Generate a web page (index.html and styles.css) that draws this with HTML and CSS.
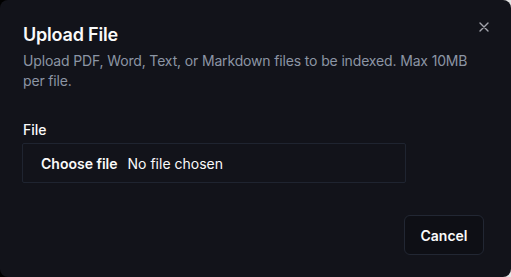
FILE: index.html
```html
<!DOCTYPE html>
<html lang="en">
<head>
    <meta charset="UTF-8">
    <meta name="viewport" content="width=device-width, initial-scale=1.0">
    <title>Upload File</title>
    <link rel="stylesheet" href="styles.css">
</head>
<body>
    <div class="dialog">
        <button class="close" aria-label="Close">
            <svg width="10" height="10" viewBox="0 0 10 10" fill="none" stroke="currentColor" stroke-width="1.4" stroke-linecap="round">
                <path d="M1 1L9 9M9 1L1 9"/>
            </svg>
        </button>
        <div class="header">
            <h2 class="title">Upload File</h2>
            <p class="description">Upload PDF, Word, Text, or Markdown files to be indexed. Max 10MB per file.</p>
        </div>
        <div class="field">
            <label class="label">File</label>
            <div class="file-input">
                <span class="file-btn">Choose file</span>
                <span class="file-name">No file chosen</span>
            </div>
        </div>
        <div class="footer">
            <button class="btn">Cancel</button>
        </div>
    </div>
</body>
</html>
```

FILE: styles.css
```css
html, body {
    margin: 0;
    height: 100%;
}

body {
    background: linear-gradient(90deg, #000 0%, #000 50%, #e4e4e4 100%);
    font-family: Inter, "Noto Sans", sans-serif;
}

.dialog {
    position: relative;
    box-sizing: border-box;
    width: 511px;
    height: 277px;
    background-color: #12131a;
    border-radius: 8px;
    padding: 21px 27px 22px 23px;
    display: flex;
    flex-direction: column;
}

.close {
    position: absolute;
    top: 22px;
    right: 22px;
    width: 10px;
    height: 10px;
    padding: 0;
    border: none;
    background: none;
    color: #a3a5ad;
    display: flex;
}

.title {
    margin: 0;
    font-size: 18px;
    line-height: 28px;
    font-weight: 600;
    color: #fafafa;
    letter-spacing: -0.2px;
}

.description {
    margin: 2px -6px 0 0;
    font-size: 14px;
    line-height: 20px;
    color: #8c95a4;
    letter-spacing: -0.15px;
}

.field {
    margin-top: 29px;
}

.label {
    display: block;
    font-size: 14px;
    line-height: 20px;
    font-weight: 500;
    color: #fafafa;
    margin-bottom: 3px;
}

.file-input {
    box-sizing: border-box;
    width: 384px;
    height: 40px;
    margin-left: -1px;
    border: 1px solid #1f2430;
    border-radius: 2px;
    display: flex;
    align-items: center;
    padding-left: 18px;
    font-size: 14px;
    color: #fafafa;
}

.file-btn {
    font-weight: 600;
    margin-right: 10px;
}

.footer {
    margin-top: auto;
    display: flex;
    justify-content: flex-end;
}

.btn {
    width: 80px;
    height: 40px;
    border: 1px solid #222733;
    border-radius: 6px;
    background-color: #0e0f15;
    color: #fafafa;
    font-family: inherit;
    font-size: 14px;
    font-weight: 600;
}
```
